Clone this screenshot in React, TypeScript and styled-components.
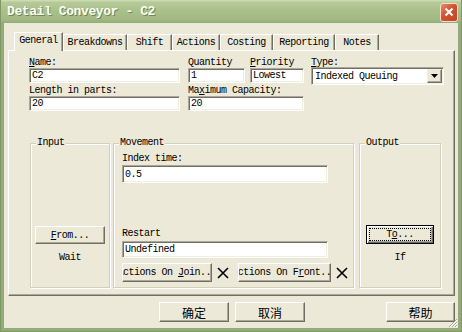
import React from 'react';
import styled, { createGlobalStyle } from 'styled-components';

const GlobalStyle = createGlobalStyle`
  html, body {
    margin: 0;
    padding: 0;
    background: #fff;
  }
  body {
    font-family: "Liberation Mono", "DejaVu Sans Mono", monospace;
    font-size: 10px;
    letter-spacing: -0.5px;
    color: #000;
  }
`;

const Window = styled.div`
  width: 462px;
  height: 332px;
  box-sizing: border-box;
  display: flex;
  flex-direction: column;
  background: #92ab78;
  border-left: 1px solid #7f9866;
  border-right: 1px solid #7f9866;
  border-bottom: 1px solid #7f9866;
`;

const TitleBar = styled.div`
  height: 23px;
  flex-shrink: 0;
  display: flex;
  align-items: center;
  justify-content: space-between;
  padding: 0 3px 0 6px;
  background: linear-gradient(
    to bottom,
    #d2dfb8 0%,
    #b6ca98 10%,
    #aac08b 45%,
    #a2b984 85%,
    #93ad77 100%
  );
`;

const Title = styled.span`
  font-family: "Liberation Mono", monospace;
  font-weight: bold;
  font-size: 13px;
  letter-spacing: -0.4px;
  color: #fbfdf4;
  text-shadow: 1px 1px 0 #6e8652;
`;

const CloseButton = styled.div`
  width: 18px;
  height: 19px;
  box-sizing: border-box;
  border: 1px solid #f3ddd0;
  border-radius: 3px;
  background: linear-gradient(135deg, #e98a6c 0%, #d2512f 45%, #c4442a 100%);
  display: flex;
  align-items: center;
  justify-content: center;
  margin-top: 1px;
`;

const Client = styled.div`
  flex: 1;
  margin: 0 3px 3px 3px;
  background: #ece9d8;
  display: flex;
  flex-direction: column;
  padding: 9px 3px 0 4px;
  position: relative;
`;

const TabStrip = styled.div`
  display: flex;
  align-items: flex-end;
  height: 18px;
  margin-left: 6px;
  position: relative;
  z-index: 1;
`;

const Tab = styled.div<{ $active?: boolean; $w: number }>`
  width: ${({ $w }) => $w}px;
  box-sizing: border-box;
  height: ${({ $active }) => ($active ? '19px' : '16px')};
  margin-bottom: ${({ $active }) => ($active ? '-1px' : '0')};
  line-height: ${({ $active }) => ($active ? '16px' : '15px')};
  text-align: center;
  white-space: nowrap;
  background: #ece9d8;
  border-top: 1px solid #fff;
  border-left: 1px solid #fff;
  border-right: 1px solid #716f64;
  box-shadow: inset -1px 0 0 #aca899;
`;

const Panel = styled.div`
  height: 246px;
  box-sizing: border-box;
  border: 1px solid;
  border-color: #fff #716f64 #716f64 #fff;
  box-shadow: inset -1px -1px 0 #aca899;
  padding: 7px 0 0 20px;
  display: flex;
  flex-direction: column;
`;

const FieldRow = styled.div`
  display: flex;
  align-items: flex-start;
  margin-bottom: 3px;
`;

const Field = styled.div<{ $w: number; $gap?: number }>`
  width: ${({ $w }) => $w}px;
  margin-left: ${({ $gap }) => $gap ?? 0}px;
  display: flex;
  flex-direction: column;
`;

const Label = styled.div`
  line-height: 10px;
  height: 10px;
  white-space: nowrap;
`;

const TextBox = styled.div<{ $h?: number; $w?: number; $top?: number }>`
  height: ${({ $h }) => $h ?? 15}px;
  width: ${({ $w }) => ($w ? `${$w}px` : 'auto')};
  margin-top: ${({ $top }) => $top ?? 0}px;
  box-sizing: border-box;
  background: #fff;
  border: 1px solid;
  border-color: #aca899 #fff #fff #aca899;
  box-shadow: inset 1px 1px 0 #716f64, inset -1px -1px 0 #f1efe2;
  padding-left: 2px;
  display: flex;
  align-items: center;
  white-space: nowrap;
  overflow: hidden;
`;

const Select = styled(TextBox)`
  margin-top: -1px;
  margin-bottom: -2px;
  justify-content: space-between;
  padding: 0 1px 0 3px;
`;

const DropButton = styled.div`
  width: 15px;
  height: 14px;
  box-sizing: border-box;
  background: #ece9d8;
  border: 1px solid;
  border-color: #f1efe2 #716f64 #716f64 #f1efe2;
  box-shadow: inset -1px -1px 0 #aca899;
  display: flex;
  align-items: center;
  justify-content: center;
`;

const GroupRow = styled.div`
  display: flex;
  margin: 29px 0 0 1px;
  height: 145px;
`;

const GroupBox = styled.div<{ $w: number; $gap?: number; $side?: boolean }>`
  position: relative;
  width: ${({ $w }) => $w}px;
  margin-left: ${({ $gap }) => $gap ?? 0}px;
  box-sizing: border-box;
  border: 1px solid #d0d0bf;
  box-shadow: inset 1px 1px 0 #fff, 1px 1px 0 #fff;
  display: flex;
  flex-direction: column;
  align-items: ${({ $side }) => ($side ? 'center' : 'stretch')};
  justify-content: ${({ $side }) => ($side ? 'flex-end' : 'space-between')};
  padding: ${({ $side }) => ($side ? '0 0 24px 0' : '10px 0 5px 8px')};
`;

const Legend = styled.span`
  position: absolute;
  top: -6px;
  left: 5px;
  line-height: 10px;
  padding: 0 1px;
  background: #ece9d8;
`;

const Block = styled.div`
  display: flex;
  flex-direction: column;
`;

const Button = styled.div<{ $w: number; $h?: number; $gap?: number; $focused?: boolean; $cjk?: boolean }>`
  width: ${({ $w }) => $w}px;
  height: ${({ $h }) => $h ?? 18}px;
  margin-left: ${({ $gap }) => $gap ?? 0}px;
  box-sizing: border-box;
  flex-shrink: 0;
  background: #ece9d8;
  border: 1px solid;
  border-color: ${({ $focused }) => ($focused ? '#000' : '#fff #716f64 #716f64 #fff')};
  box-shadow: ${({ $focused }) =>
    $focused
      ? 'inset 1px 1px 0 #fff, inset -1px -1px 0 #716f64, inset -2px -2px 0 #aca899'
      : 'inset -1px -1px 0 #aca899'};
  display: flex;
  align-items: center;
  justify-content: center;
  overflow: hidden;
  white-space: nowrap;
  padding: ${({ $focused }) => ($focused ? '2px' : '0')};
  font-family: ${({ $cjk }) =>
    $cjk ? '"Noto Sans CJK SC", sans-serif' : '"Liberation Mono", monospace'};
  font-size: ${({ $cjk }) => ($cjk ? '12px' : '10px')};
  letter-spacing: ${({ $cjk }) => ($cjk ? '0' : '-0.5px')};
`;

const Caption = styled.span`
  white-space: pre;
  flex-shrink: 0;
`;

const FocusRect = styled.span`
  flex: 1;
  align-self: stretch;
  border: 1px dotted #000;
  display: flex;
  align-items: center;
  justify-content: center;
`;

const Note = styled.div`
  margin-top: 9px;
  line-height: 10px;
`;

const ActionRow = styled.div`
  display: flex;
  align-items: center;
  margin-top: 5px;
`;

const RemoveIcon = styled.svg<{ $gap: number }>`
  margin-left: ${({ $gap }) => $gap}px;
  flex-shrink: 0;
`;

const ButtonRow = styled.div`
  display: flex;
  margin-top: 6px;
  padding-left: 151px;
  gap: 6px;
`;

const Spacer = styled.div`
  flex: 1;
`;

const SizeGrip = styled.svg`
  position: absolute;
  right: 0;
  bottom: 0;
`;

const tabs = [
  { label: 'General', w: 49, active: true },
  { label: 'Breakdowns', w: 64 },
  { label: 'Shift', w: 45 },
  { label: 'Actions', w: 48 },
  { label: 'Costing', w: 53 },
  { label: 'Reporting', w: 62 },
  { label: 'Notes', w: 44 },
];

const Cross = ({ gap }: { gap: number }) => (
  <RemoveIcon $gap={gap} width="12" height="12" viewBox="0 0 12 12">
    <path d="M1 1 L11 11 M11 1 L1 11" stroke="#000" strokeWidth="1.6" />
  </RemoveIcon>
);

export default function App() {
  return (
    <>
      <GlobalStyle />
      <Window>
        <TitleBar>
          <Title>Detail Conveyor - C2</Title>
          <CloseButton>
            <svg width="10" height="10" viewBox="0 0 10 10">
              <path d="M1.5 1.5 L8.5 8.5 M8.5 1.5 L1.5 8.5" stroke="#fff" strokeWidth="2" />
            </svg>
          </CloseButton>
        </TitleBar>
        <Client>
          <TabStrip>
            {tabs.map((t) => (
              <Tab key={t.label} $w={t.w} $active={t.active}>
                {t.label}
              </Tab>
            ))}
          </TabStrip>
          <Panel>
            <FieldRow>
              <Field $w={151}>
                <Label>
                  <u>N</u>ame:
                </Label>
                <TextBox>C2</TextBox>
              </Field>
              <Field $w={57} $gap={8}>
                <Label>Quantity</Label>
                <TextBox>1</TextBox>
              </Field>
              <Field $w={54} $gap={5}>
                <Label>
                  <u>P</u>riority
                </Label>
                <TextBox>Lowest</TextBox>
              </Field>
              <Field $w={133} $gap={7}>
                <Label>
                  <u>T</u>ype:
                </Label>
                <Select $h={18}>
                  <span>Indexed Queuing</span>
                  <DropButton>
                    <svg width="7" height="4" viewBox="0 0 7 4">
                      <path d="M0 0 H7 L3.5 4 Z" fill="#000" />
                    </svg>
                  </DropButton>
                </Select>
              </Field>
            </FieldRow>
            <FieldRow>
              <Field $w={151}>
                <Label>Length in parts:</Label>
                <TextBox>20</TextBox>
              </Field>
              <Field $w={116} $gap={8}>
                <Label>
                  Ma<u>x</u>imum Capacity:
                </Label>
                <TextBox>20</TextBox>
              </Field>
            </FieldRow>
            <GroupRow>
              <GroupBox $w={80} $side>
                <Legend>Input</Legend>
                <Button $w={70}>
                  <Caption>
                    <u>F</u>rom...
                  </Caption>
                </Button>
                <Note>Wait</Note>
              </GroupBox>
              <GroupBox $w={241} $gap={3}>
                <Legend>Movement</Legend>
                <Block>
                  <Label>Index time:</Label>
                  <TextBox $h={18} $w={206} $top={1}>
                    0.5
                  </TextBox>
                </Block>
                <Block>
                  <Label>Restart</Label>
                  <TextBox $h={17} $w={206} $top={2}>
                    Undefined
                  </TextBox>
                  <ActionRow>
                    <Button $w={90} $h={19}>
                      <Caption>
                        Actions On <u>J</u>oin...
                      </Caption>
                    </Button>
                    <Cross gap={5} />
                    <Button $w={93} $h={19} $gap={9}>
                      <Caption>
                        Actions On F<u>r</u>ont...
                      </Caption>
                    </Button>
                    <Cross gap={5} />
                  </ActionRow>
                </Block>
              </GroupBox>
              <GroupBox $w={82} $gap={5} $side>
                <Legend>Output</Legend>
                <Button $w={68} $h={19} $focused>
                  <FocusRect>
                    <Caption>
                      T<u>o</u>...
                    </Caption>
                  </FocusRect>
                </Button>
                <Note>If</Note>
              </GroupBox>
            </GroupRow>
          </Panel>
          <ButtonRow>
            <Button $w={70} $h={20} $cjk>
              确定
            </Button>
            <Button $w={70} $h={20} $cjk>
              取消
            </Button>
            <Spacer />
            <Button $w={69} $h={20} $cjk>
              帮助
            </Button>
          </ButtonRow>
          <SizeGrip width="12" height="12" viewBox="0 0 12 12">
            <path d="M11 3 L3 11 M11 6 L6 11 M11 9 L9 11" stroke="#aca899" strokeWidth="1" />
            <path d="M11 4 L4 11 M11 7 L7 11 M11 10 L10 11" stroke="#fff" strokeWidth="1" />
          </SizeGrip>
        </Client>
      </Window>
    </>
  );
}
